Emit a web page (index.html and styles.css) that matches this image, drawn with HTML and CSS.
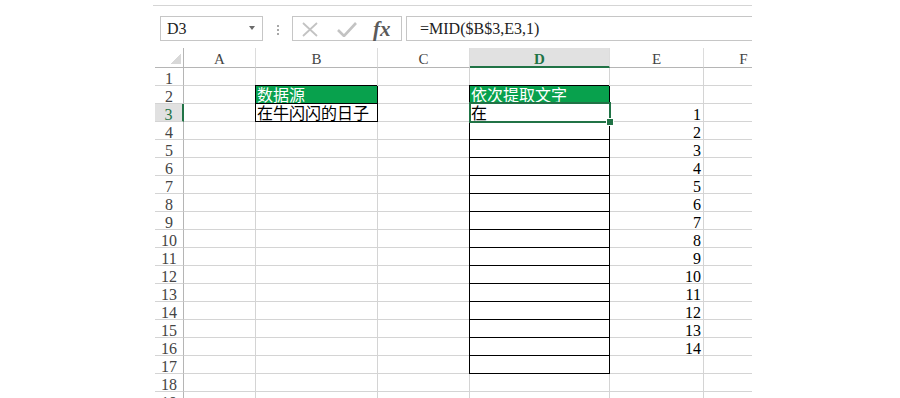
FILE: index.html
```html
<!DOCTYPE html>
<html lang="zh-CN">
<head>
  <meta charset="UTF-8">
  <title>MID 依次提取文字</title>
  <link rel="stylesheet" href="styles.css">
</head>
<body>
  <div class="window">
    <div class="ribbon-edge"></div>

    <!-- Név mező + szerkesztőléc -->
    <div class="formula-row">
      <div class="name-box">
        <span>D3</span>
        <svg class="drop" width="6" height="4" viewBox="0 0 6 4"><path d="M0 0H6L3 4Z" fill="#6a6a6a"/></svg>
      </div>
      <div class="grip"><i></i><i></i><i></i></div>
      <div class="fx-buttons">
        <svg width="18" height="15" viewBox="0 0 18 15">
          <path d="M2 1L16 14M16 1L2 14" stroke="#c3c3c3" stroke-width="1.8" fill="none"/>
        </svg>
        <svg width="20" height="15" viewBox="0 0 20 15">
          <path d="M1 8L7 14L19 1" stroke="#c3c3c3" stroke-width="2.6" fill="none"/>
        </svg>
        <span class="fx">fx</span>
      </div>
      <div class="formula">=MID($B$3,E3,1)</div>
    </div>

    <!-- Munkalap -->
    <div class="sheet" id="sheet"></div>
  </div>

  <script>
    const columns = ['A', 'B', 'C', 'D', 'E', 'F'];
    const activeCol = 'D';
    const activeRow = 3;

    // Cellák tartalma
    const data = {
      B2: { text: '数据源', cls: 'fill txt boxed' },
      B3: { text: '在牛闪闪的日子', cls: 'txt boxed' },
      D2: { text: '依次提取文字', cls: 'fill txt boxed' },
      D3: { text: '在', cls: 'txt boxed selected' }
    };
    for (let r = 4; r <= 17; r++) {
      data['D' + r] = { text: '', cls: 'boxed' };
    }
    for (let r = 3; r <= 16; r++) {
      data['E' + r] = { text: String(r - 2), cls: 'num' };
    }

    let html = '<div class="corner"><span></span></div>';
    columns.forEach(c => {
      html += `<div class="col-head${c === activeCol ? ' active' : ''}">${c}</div>`;
    });
    for (let r = 1; r <= 19; r++) {
      html += `<div class="row-head${r === activeRow ? ' active' : ''}">${r}</div>`;
      columns.forEach(c => {
        const cell = data[c + r];
        const cls = cell ? 'cell ' + cell.cls : 'cell';
        html += `<div class="${cls}">${cell ? cell.text : ''}</div>`;
      });
    }
    document.getElementById('sheet').innerHTML = html;
  </script>
</body>
</html>
```

FILE: styles.css
```css
* {
  box-sizing: border-box;
  margin: 0;
  padding: 0;
}
body {
  background: #fff;
  color: #000;
  font-family: "Liberation Serif", "Noto Sans CJK SC", serif;
  font-size: 16px;
  overflow: hidden;
}
.window {
  width: 599px;
  height: 398px;
  margin-left: 153px;
  overflow: hidden;
}
.ribbon-edge {
  height: 6px;
  border-bottom: 1px solid #d5d5d5;
}

/* Szerkesztőléc */
.formula-row {
  display: flex;
  height: 25px;
  margin-top: 10px;
  padding-left: 7px;
}
.name-box {
  width: 103px;
  display: flex;
  align-items: center;
  justify-content: space-between;
  padding: 1px 7px 0 6px;
  border: 1px solid #c6c6c6;
  color: #222;
}
.name-box .drop {
  margin-top: -2px;
}
.grip {
  width: 29px;
  display: flex;
  flex-direction: column;
  align-items: center;
  justify-content: center;
  gap: 2px;
  padding-top: 3px;
}
.grip i {
  width: 2px;
  height: 2px;
  background: #a8a8a8;
}
.fx-buttons {
  width: 110px;
  display: flex;
  align-items: center;
  gap: 18px;
  padding: 1px 0 0 8px;
  border: 1px solid #c6c6c6;
}
.fx {
  font-family: "Liberation Serif", serif;
  font-style: italic;
  font-weight: bold;
  font-size: 21px;
  color: #5a5a5a;
  margin-left: -2px;
  line-height: 20px;
}
.formula {
  flex: 1;
  margin-left: 4px;
  padding: 1px 0 0 13px;
  border: 1px solid #c6c6c6;
  border-right: none;
  line-height: 22px;
  white-space: nowrap;
  color: #222;
}

/* Táblázat */
.sheet {
  display: grid;
  grid-template-columns: 29px 72px 122px 92px 140px 94px 80px;
  grid-template-rows: 20px;
  grid-auto-rows: 18px;
  margin: 7px 0 0 2px;
}
.corner {
  display: flex;
  justify-content: flex-end;
  align-items: flex-end;
  padding: 0 2px 3px 0;
  border-right: 1px solid #b5b5b5;
  border-bottom: 1px solid #b5b5b5;
}
.corner span {
  width: 11px;
  height: 10px;
  background: linear-gradient(to bottom right, transparent 50%, #d8d8d8 50%);
}
.col-head {
  padding-top: 3px;
  text-align: center;
  font-size: 15px;
  line-height: 16px;
  color: #444;
  border-right: 1px solid #dcdcdc;
  border-bottom: 1px solid #b5b5b5;
}
.col-head.active {
  background: #e1e1e1;
  color: #217346;
  font-weight: bold;
  border-bottom: 2px solid #217346;
}
.row-head {
  padding-top: 2px;
  text-align: center;
  line-height: 18px;
  color: #444;
  border-right: 1px solid #b5b5b5;
  border-bottom: 1px solid #d4d4d4;
}
.row-head.active {
  background: #e1e1e1;
  color: #217346;
  border-right: 2px solid #217346;
}
.cell {
  padding: 2px 2px 0 1px;
  line-height: 18px;
  white-space: nowrap;
  border-right: 1px solid #d4d4d4;
  border-bottom: 1px solid #d4d4d4;
}
.cell.txt {
  padding-top: 0;
  font-family: "Noto Sans CJK SC", sans-serif;
  line-height: 17px;
}
.cell.num {
  text-align: right;
}
.cell.fill {
  background: #08a14d;
  color: #fff;
}
.cell.boxed {
  border-right-color: #000;
  border-bottom-color: #000;
  box-shadow: -1px -1px 0 #000, -1px 0 0 #000;
}
.cell.selected {
  position: relative;
}
.cell.selected::after {
  content: "";
  position: absolute;
  top: -2px;
  left: -1px;
  right: -2px;
  bottom: -2px;
  border: 2px solid #217346;
}
.cell.selected::before {
  content: "";
  position: absolute;
  right: -4px;
  bottom: -4px;
  width: 6px;
  height: 6px;
  background: #217346;
  outline: 1px solid #fff;
  z-index: 1;
}
```
